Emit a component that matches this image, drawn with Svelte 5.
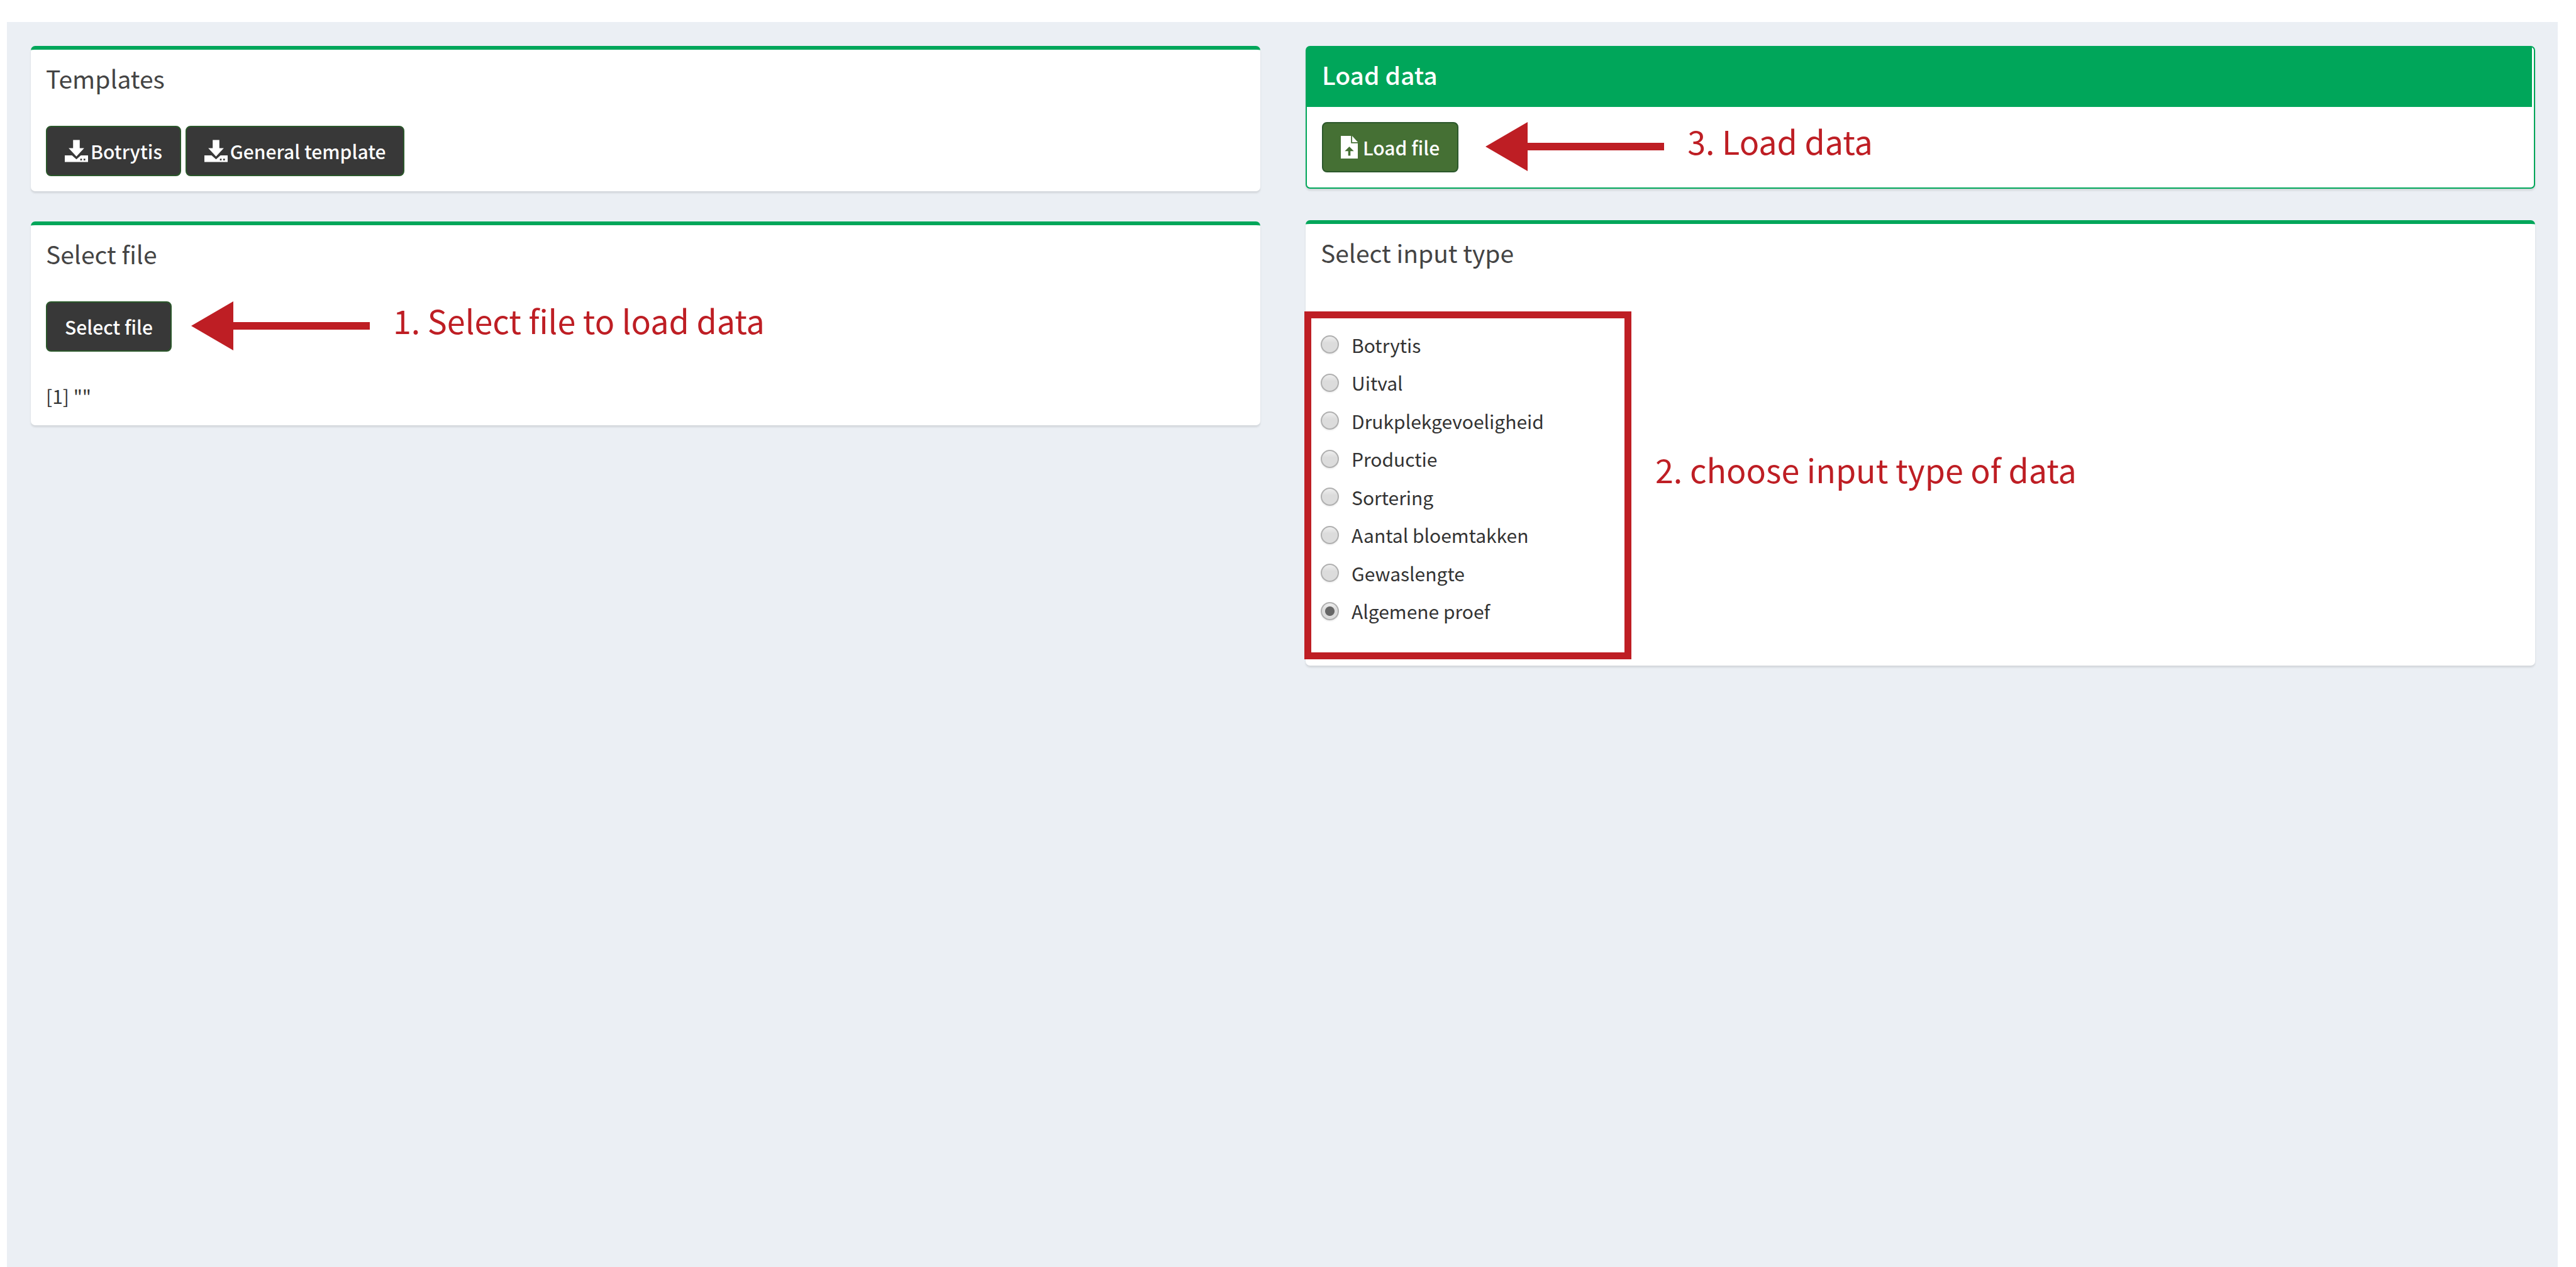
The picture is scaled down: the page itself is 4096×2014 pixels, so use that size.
<script>
  const types = [
    'Botrytis',
    'Uitval',
    'Drukplekgevoeligheid',
    'Productie',
    'Sortering',
    'Aantal bloemtakken',
    'Gewaslengte',
    'Algemene proef'
  ];
  let selected = $state('Algemene proef');
</script>

{#snippet downloadIcon()}
  <svg class="icon download" viewBox="0 0 42 40" aria-hidden="true">
    <path d="M15 0h12v15h8L21 30 7 15h8z" />
    <path fill-rule="evenodd" d="M0 28h13l8 7 8-7h13v12H0zM28 34v3h3v-3zM34 34v3h3v-3z" />
  </svg>
{/snippet}

{#snippet arrow()}
  <svg class="arrow" viewBox="0 0 284 78" aria-hidden="true">
    <path d="M0 39 67 0v33h217v12H67v33z" />
  </svg>
{/snippet}

<main>
  <div class="column">
    <section class="box">
      <h3>Templates</h3>
      <div class="body">
        <div class="row">
          <button type="button">{@render downloadIcon()}Botrytis</button>
          <button type="button">{@render downloadIcon()}General template</button>
        </div>
      </div>
    </section>

    <section class="box">
      <h3>Select file</h3>
      <div class="body">
        <div class="row">
          <button type="button">Select file</button>
          <div class="note">
            {@render arrow()}
            <span>1. Select file to load data</span>
          </div>
        </div>
        <output>[1] ""</output>
      </div>
    </section>
  </div>

  <div class="column right">
    <section class="box solid">
      <h3>Load data</h3>
      <div class="body">
        <div class="row">
          <button type="button" class="load">
            <svg class="icon file" viewBox="0 0 30 40" aria-hidden="true">
              <path fill-rule="evenodd" d="M0 0h18v13h12v27H0zM15 19l-8 8h6v8h4v-8h6z" />
              <path d="M20 0l10 11H20z" />
            </svg>Load file
          </button>
          <div class="note">
            {@render arrow()}
            <span>3. Load data</span>
          </div>
        </div>
      </div>
    </section>

    <section class="box types">
      <h3>Select input type</h3>
      <div class="body">
        <fieldset aria-label="Select input type">
          {#each types as type}
            <label>
              <input type="radio" name="input-type" value={type} bind:group={selected} />
              {type}
            </label>
          {/each}
        </fieldset>
        <p class="note">2. choose input type of data</p>
      </div>
    </section>
  </div>
</main>

<style>
  :global(body) {
    background: #fff;
  }
  :global(#app) {
    display: flex;
    min-height: 100vh;
  }
  main {
    flex: 1;
    box-sizing: border-box;
    display: grid;
    grid-template-columns: 1fr 1fr;
    gap: 72px;
    align-items: start;
    margin: 35px 29px 0 11px;
    padding: 38px 36px 38px 38px;
    background: #ebeff4;
    color: #333;
    font: 30px/46px 'Noto Sans CJK JP', 'Noto Sans', sans-serif;
  }
  .column {
    display: grid;
    gap: 48px;
  }
  .right {
    gap: 50px;
  }
  .box {
    background: #fff;
    border-top: 6px solid #00a65a;
    border-radius: 7px;
    box-shadow: 0 3px 3px rgba(0, 0, 0, 0.1);
  }
  h3 {
    margin: 0;
    padding: 21px 24px 28px;
    color: #444;
    font-size: 39px;
    line-height: 48px;
    font-weight: 400;
  }
  .body {
    padding: 24px;
  }
  .row {
    display: flex;
    align-items: flex-start;
    gap: 7px;
  }
  button {
    display: flex;
    align-items: center;
    box-sizing: border-box;
    height: 80px;
    padding: 0 28px;
    border: 2px solid #2b572b;
    border-radius: 8px;
    background: #383838;
    color: #fff;
    font: inherit;
    font-weight: 500;
    white-space: nowrap;
  }
  button.load {
    background: #457034;
  }
  .icon {
    flex: none;
    height: 36px;
    fill: #fff;
  }
  .download {
    width: 37px;
    margin-right: 4px;
  }
  .file {
    width: 27px;
    margin-right: 8px;
  }
  .note {
    color: #be1e24;
    font-size: 52px;
    line-height: 60px;
    white-space: nowrap;
  }
  div.note {
    display: flex;
    align-items: flex-start;
    gap: 37px;
    margin-left: 24px;
  }
  .solid .note {
    margin-left: 36px;
  }
  .arrow {
    width: 284px;
    height: 78px;
    fill: #be1e24;
  }
  output {
    display: block;
    margin-top: 47px;
  }
  .solid {
    border: 2px solid #00a65a;
  }
  .solid h3 {
    margin-right: 3px;
    padding: 19px 24px 28px;
    background: #00a65a;
    color: #fff;
    font-weight: 500;
  }
  .types .body {
    display: flex;
    align-items: center;
    gap: 38px;
    padding: 42px 0 10px;
  }
  fieldset {
    display: grid;
    grid-auto-rows: 61px 60px;
    align-items: center;
    box-sizing: border-box;
    width: 520px;
    margin: 0 0 0 -2px;
    padding: 11px 15px 36px;
    border: 11px solid #be1e24;
  }
  label {
    display: flex;
    align-items: center;
    gap: 20px;
  }
  input {
    appearance: none;
    box-sizing: border-box;
    width: 29px;
    height: 29px;
    margin: 0;
    border: 2px solid #b0b0b0;
    border-radius: 50%;
    background: linear-gradient(#eee, #dcdcdc 40%);
    box-shadow: 0 2px 2px rgba(0, 0, 0, 0.06);
  }
  input:checked {
    background:
      radial-gradient(circle, #666 0 7px, transparent 8px),
      linear-gradient(#eee, #dcdcdc 40%);
  }
  p {
    margin: 0;
    padding-bottom: 52px;
  }
</style>
